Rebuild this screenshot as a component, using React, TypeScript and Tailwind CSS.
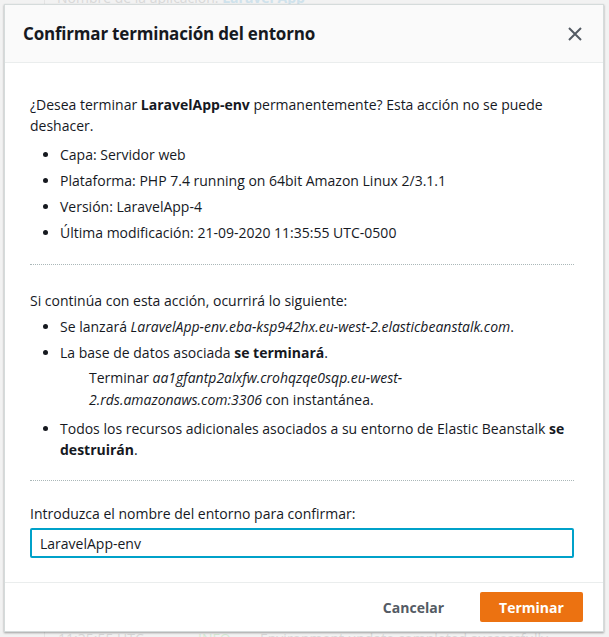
import React from 'react';

const font = { fontFamily: '"Open Sans", "Liberation Sans", sans-serif' };

export default function App() {
  return (
    <div className="relative w-[609px] h-[637px] overflow-hidden bg-[#f2f2f2]" style={font}>
      {/* faded page behind the modal */}
      <div className="flex h-full flex-col justify-between pl-[44px] text-[14px] text-[#d9d9d9]">
        <div className="-mt-[12px] border-l border-[#e4e4e4] pl-[12px] leading-[20px]">
          Nombre de la aplicación: <span className="font-bold text-[#cfe2ec]">Laravel App</span>
        </div>
        <div className="-mb-[12px] flex border-l border-[#e4e4e4] pl-[13px] leading-[20px]">
          <span className="w-[140px]">11:35:55 UTC</span>
          <span className="w-[62px] text-[#d6ead6]">INFO</span>
          <span>Environment update completed successfully</span>
        </div>
      </div>

      {/* Modal */}
      <div className="absolute left-[4px] top-[4px] w-[600px] h-[628px] flex flex-col bg-white border border-[#d5dbdb] shadow-[0_1px_2px_rgba(0,0,0,0.35)] text-[#16191f]">
        <div className="flex h-[58px] shrink-0 items-center justify-between border-b border-[#eaeded] bg-[#fafafa] pl-[18px] pr-[20px]">
          <h2 className="text-[17px] font-bold tracking-[-0.2px]">Confirmar terminación del entorno</h2>
          <button className="text-[#545b64]">
            <svg width="16" height="16" viewBox="0 0 16 16" fill="none" stroke="currentColor" strokeWidth="2">
              <path d="M2 2l12 12M14 2L2 14" />
            </svg>
          </button>
        </div>

        <div className="flex-1 pl-[25px] pr-[29px] text-[14px] leading-[21px]">
          <div className="border-b border-dotted border-[#aab7b8] pt-[31px] pb-[21px]">
            <p>
              ¿Desea terminar <b>LaravelApp-env</b> permanentemente? Esta acción no se puede deshacer.
            </p>
            <ul className="mt-[8px] list-disc pl-[30px] space-y-[5px]">
              <li>Capa: Servidor web</li>
              <li>Plataforma: PHP 7.4 running on 64bit Amazon Linux 2/3.1.1</li>
              <li>Versión: LaravelApp-4</li>
              <li>Última modificación: 21-09-2020 11:35:55 UTC-0500</li>
            </ul>
          </div>

          <div className="border-b border-dotted border-[#aab7b8] pt-[25px] pb-[20px]">
            <p>Si continúa con esta acción, ocurrirá lo siguiente:</p>
            <ul className="mt-[5px] list-disc pl-[30px]">
              <li>
                Se lanzará <i>LaravelApp-env.eba-ksp942hx.eu-west-2.elasticbeanstalk.com</i>.
              </li>
              <li className="mt-[5px]">
                La base de datos asociada <b>se terminará</b>.
                <p className="mt-[4px] pl-[29px] leading-[22px]">
                  Terminar <i>aa1gfantp2alxfw.crohqzqe0sqp.eu-west-2.rds.amazonaws.com:3306</i> con instantánea.
                </p>
              </li>
              <li className="mt-[7px]">
                Todos los recursos adicionales asociados a su entorno de Elastic Beanstalk <b>se destruirán</b>.
              </li>
            </ul>
          </div>

          <div className="pt-[22px]">
            <label className="block">Introduzca el nombre del entorno para confirmar:</label>
            <input
              readOnly
              value="LaravelApp-env"
              className="mt-[4px] h-[30px] w-full rounded-[2px] border-2 border-[#00a1c9] px-[8px] text-[14px] text-[#16191f] outline-none"
            />
          </div>
        </div>

        <div className="flex h-[49px] shrink-0 items-center justify-end gap-[16px] border-t border-[#eaeded] pr-[20px]">
          <button className="px-[20px] text-[14px] font-bold text-[#545b64]">Cancelar</button>
          <button className="h-[30px] w-[103px] rounded-[2px] bg-[#ec7211] text-[14px] font-bold text-white">
            Terminar
          </button>
        </div>
      </div>
    </div>
  );
}
